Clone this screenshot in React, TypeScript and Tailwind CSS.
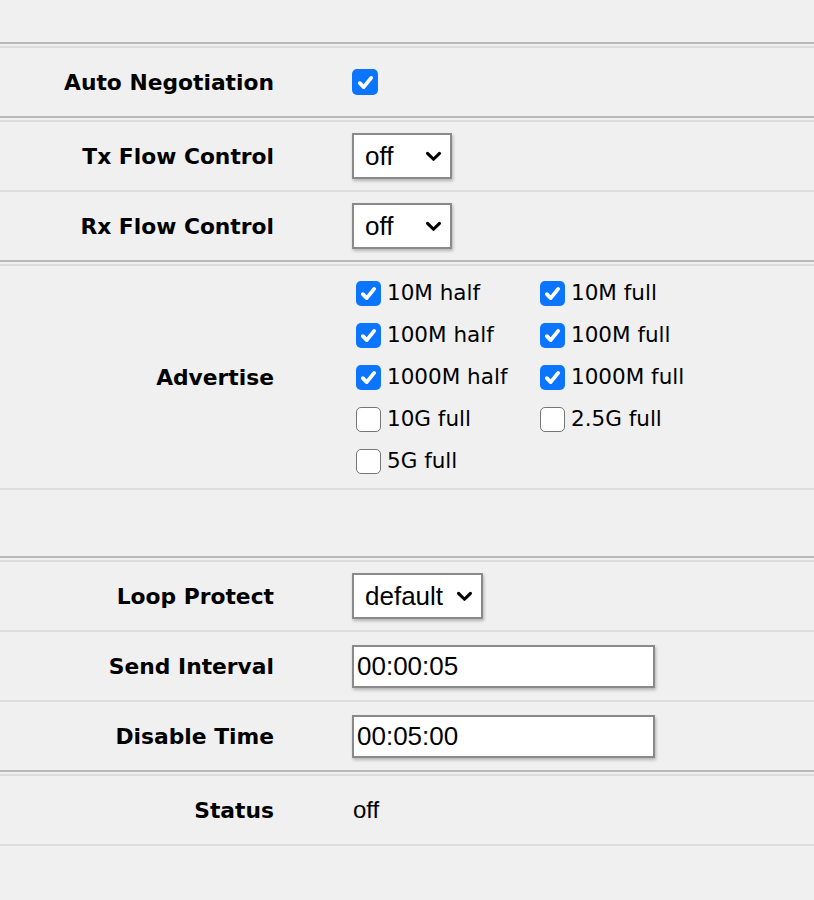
import { ReactNode } from "react";

const labelFont = { fontFamily: '"DejaVu Sans", Verdana, sans-serif' };
const fieldFont = { fontFamily: '"Liberation Sans", Arial, sans-serif' };

function SectionLine() {
  return (
    <div>
      <div className="h-[2px] bg-[#b9b9b9]" />
      <div className="h-[2px]" />
      <div className="h-[2px] bg-[#dcdcdc]" />
    </div>
  );
}

function RowLine() {
  return <div className="h-[2px] bg-[#dedede]" />;
}

function Row({ label, children, h = "h-[68px]" }: { label: string; children: ReactNode; h?: string }) {
  return (
    <div className={`flex items-center ${h}`}>
      <div className="w-[274px] pt-[2px] text-right text-[21.8px] font-bold text-black" style={labelFont}>
        {label}
      </div>
      <div className="ml-[78px] flex-1">{children}</div>
    </div>
  );
}

function Check({ checked, size = "big" }: { checked: boolean; size?: "big" | "small" }) {
  const box = size === "big" ? "w-[26px] h-[26px]" : "w-[25px] h-[25px]";
  if (!checked) {
    return <div className={`${box} rounded-[5px] border-[1.5px] border-[#767676] bg-white shrink-0`} />;
  }
  return (
    <div className={`${box} rounded-[5px] bg-[#0b75ff] flex items-center justify-center shrink-0`}>
      <svg viewBox="0 0 20 20" className="w-[21px] h-[21px]">
        <path d="M4.6 10.6 L8.3 14.4 L15.4 5.6" fill="none" stroke="white" strokeWidth="3.6" strokeLinecap="round" strokeLinejoin="round" />
      </svg>
    </div>
  );
}

function Select({ value, w }: { value: string; w: string }) {
  return (
    <div
      className={`${w} h-[46px] border-2 border-[#8a8a8a] bg-white flex items-center justify-between pl-[11px] pr-[8px] shadow-[1px_2px_3px_rgba(0,0,0,0.25)]`}
      style={fieldFont}
    >
      <span className="text-[26px] text-black leading-none">{value}</span>
      <svg viewBox="0 0 18 12" className="w-[17px] h-[11px]">
        <path d="M2.5 2.5 L9 9 L15.5 2.5" fill="none" stroke="black" strokeWidth="3.4" strokeLinecap="round" strokeLinejoin="round" />
      </svg>
    </div>
  );
}

function TextField({ value }: { value: string }) {
  return (
    <div
      className="w-[303px] h-[43px] border-2 border-[#8a8a8a] bg-white flex items-center pl-[3px] shadow-[1px_2px_3px_rgba(0,0,0,0.25)]"
      style={fieldFont}
    >
      <span className="text-[26px] text-black leading-none">{value}</span>
    </div>
  );
}

const advertise = [
  ["10M half", true, "10M full", true],
  ["100M half", true, "100M full", true],
  ["1000M half", true, "1000M full", true],
  ["10G full", false, "2.5G full", false],
  ["5G full", false, null, false],
] as const;

function Opt({ label, checked }: { label: string; checked: boolean }) {
  return (
    <div className="flex items-center w-[184px]">
      <Check checked={checked} size="small" />
      <span className="ml-[6px] text-[21.5px] text-black mt-[1px]" style={labelFont}>
        {label}
      </span>
    </div>
  );
}

export default function App() {
  return (
    <div className="min-h-[900px] w-full bg-[#f0f0f0]">
      <div className="h-[42px]" />
      <SectionLine />
      <Row label="Auto Negotiation">
        <div className="flex">
          <Check checked />
        </div>
      </Row>
      <SectionLine />
      <Row label="Tx Flow Control">
        <Select value="off" w="w-[100px]" />
      </Row>
      <RowLine />
      <Row label="Rx Flow Control">
        <Select value="off" w="w-[100px]" />
      </Row>
      <SectionLine />
      <Row label="Advertise" h="h-[222px]">
        <div className="ml-[4px] flex flex-col">
          {advertise.map(([a, ac, b, bc]) => (
            <div key={a} className="flex items-center h-[42px]">
              <Opt label={a} checked={ac} />
              {b && <Opt label={b} checked={bc} />}
            </div>
          ))}
        </div>
      </Row>
      <RowLine />
      <div className="h-[66px]" />
      <SectionLine />
      <Row label="Loop Protect">
        <Select value="default" w="w-[131px]" />
      </Row>
      <RowLine />
      <Row label="Send Interval">
        <TextField value="00:00:05" />
      </Row>
      <RowLine />
      <Row label="Disable Time">
        <TextField value="00:05:00" />
      </Row>
      <SectionLine />
      <Row label="Status">
        <span className="ml-[1px] text-[24px] text-black" style={fieldFont}>
          off
        </span>
      </Row>
      <RowLine />
    </div>
  );
}
